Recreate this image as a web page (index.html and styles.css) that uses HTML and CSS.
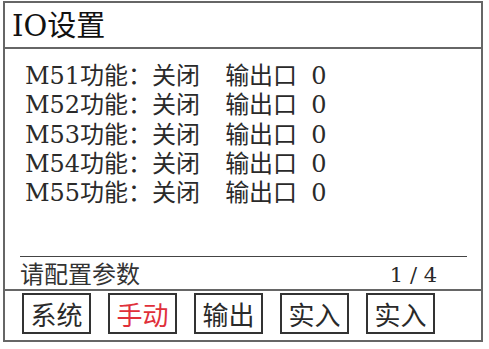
FILE: index.html
```html
<!DOCTYPE html>
<html lang="zh">
<head>
<meta charset="utf-8">
<link rel="stylesheet" href="styles.css">
</head>
<body>
<div class="frame">
  <div class="title">IO设置</div>
  <div class="content">
    <div class="rows">
      <div class="row"><span class="name">M51功能：关闭</span><span class="out">输出口</span><span class="val">0</span></div>
      <div class="row"><span class="name">M52功能：关闭</span><span class="out">输出口</span><span class="val">0</span></div>
      <div class="row"><span class="name">M53功能：关闭</span><span class="out">输出口</span><span class="val">0</span></div>
      <div class="row"><span class="name">M54功能：关闭</span><span class="out">输出口</span><span class="val">0</span></div>
      <div class="row"><span class="name">M55功能：关闭</span><span class="out">输出口</span><span class="val">0</span></div>
    </div>
    <div class="status">
      <span class="hint">请配置参数</span>
      <span class="page">1 / 4</span>
    </div>
  </div>
  <div class="footer">
    <div class="btn">系统</div>
    <div class="btn active">手动</div>
    <div class="btn">输出</div>
    <div class="btn">实入</div>
    <div class="btn">实入</div>
  </div>
</div>
</body>
</html>
```

FILE: styles.css
```css
html, body {
  margin: 0;
  padding: 0;
  background: #ffffff;
}

body {
  font-family: "DejaVu Serif", "Noto Sans CJK SC", serif;
  color: #2a2a2a;
}

.frame {
  margin: 1px 0 0 3px;
  width: 476px;
  height: 337px;
  border: 2px solid #666666;
  display: flex;
  flex-direction: column;
}

.title {
  height: 44px;
  border-bottom: 2px solid #666666;
  font-size: 29px;
  line-height: 46px;
  padding-left: 7px;
  color: #111111;
}

.content {
  height: 240px;
  display: flex;
  flex-direction: column;
  padding: 0 14px 0 15px;
}

.rows {
  padding-top: 13px;
  flex: 1;
}

.row {
  height: 29.3px;
  line-height: 29px;
  font-size: 24px;
  white-space: nowrap;
  padding-left: 5px;
}

.out {
  margin-left: 25px;
}

.val {
  margin-left: 14px;
}

.status {
  border-top: 1px solid #444444;
  height: 32px;
  display: flex;
  justify-content: space-between;
  align-items: center;
  font-size: 21px;
}

.hint {
  font-family: "Noto Sans CJK SC", sans-serif;
  font-size: 24px;
  line-height: 32px;
  color: #333333;
}

.page {
  margin-right: 30px;
  line-height: 32px;
  padding-top: 4px;
}

.footer {
  border-top: 2px solid #666666;
  display: flex;
  gap: 17px;
  padding: 2px 0 0 17px;
}

.btn {
  width: 65px;
  height: 37px;
  border: 2px solid #333333;
  font-family: "Noto Sans CJK SC", sans-serif;
  font-size: 26px;
  line-height: 37px;
  text-align: center;
  color: #2a2a2a;
}

.btn.active {
  color: #e0303a;
}
```
